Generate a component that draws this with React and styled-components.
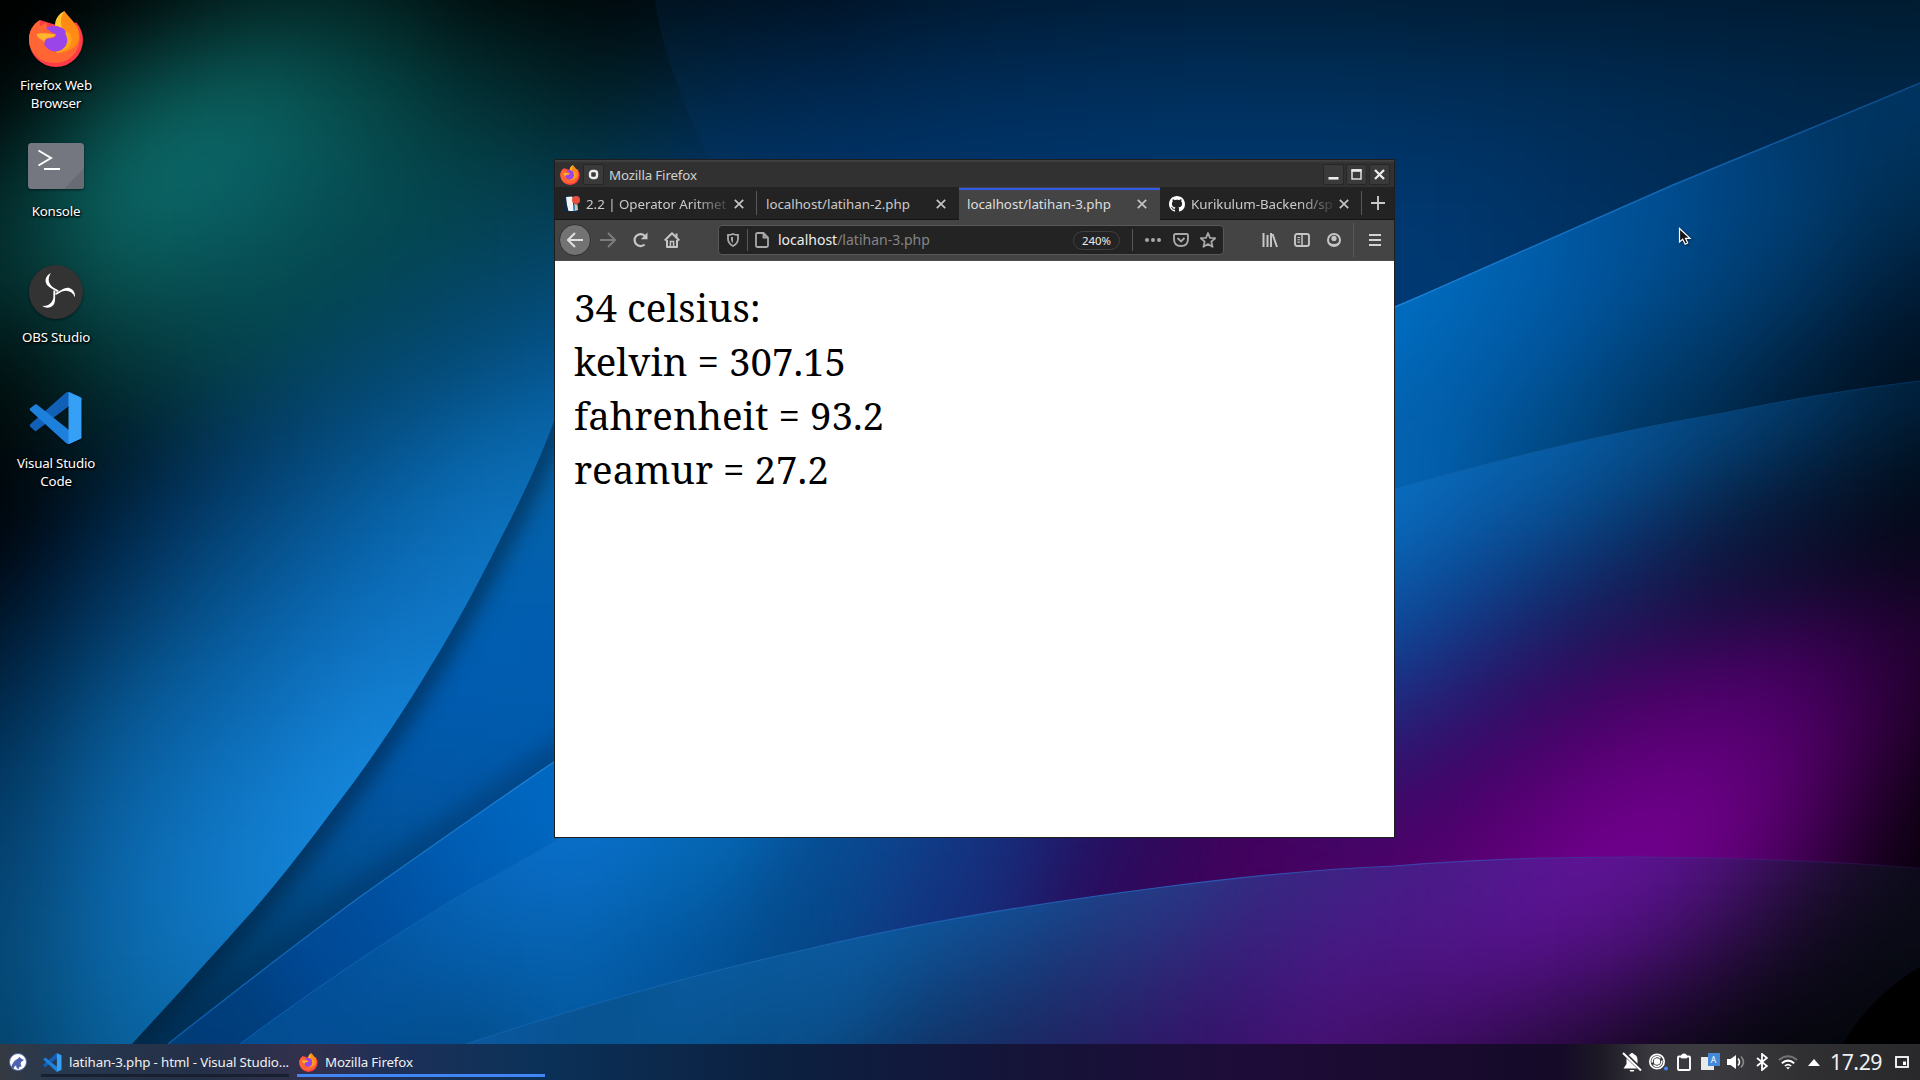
import React from "react";
import styled, { createGlobalStyle } from "styled-components";

const GlobalStyle = createGlobalStyle`
  * { box-sizing: border-box; }
  html, body { margin: 0; padding: 0; background: #000; overflow: hidden; }
  body { font-family: "Noto Sans", "Open Sans", sans-serif; }
  svg { display: block; flex: none; }
`;

/* ---------- Wallpaper ---------- */

const hex = (c) => [0, 2, 4].map((i) => parseInt(c.slice(i, i + 2), 16));
const grid = (xs, rows) =>
  rows.flatMap(([y, line]) => line.split(" ").map((c, i) => [xs[i], y, c]));

const skyNodes = [
  ...grid([0, 120, 240, 360, 480, 600], [
    [-90, "000000 000000 000c0c 000c0e 000000 000000"],
    [0, "000000 000202 022221 022423 000809 000508"],
    [90, "000101 074644 0b6260 064d4c 023033 011d22"],
    [180, "011f1f 0c6f6c 0a6468 065055 04444c 04374b"],
    [270, "032a2a 0a5a59 065056 04464f 034660 044a74"],
    [360, "000808 04393b 04444c 044668 044a7a 05599a"],
    [450, "000204 001a28 033663 054f87 0868ac 0a6ab0"],
    [540, "000106 002a50 044a80 0762a8 0d72c0 0f74c0"],
    [630, "00152a 033f6e 075c9f 0e70bf 0f78c8 0f78c8"],
    [720, "00294c 075a96 0c6bb5 1482d6 1480d0 1480d0"],
    [810, "033860 0a64a8 0f78c8 1789de 1787dc 1787dc"],
    [900, "04406c 0b6ab0 127ccc 1787dc 1787dc 1787dc"],
    [990, "04446c 0a68a8 0d70b8 0d70b8 0d70b8 0d70b8"],
    [1080, "033a60 085c95 085c95 085c95 085c95 085c95"],
  ]),
  ...grid([720, 840, 960, 1080, 1200, 1320, 1440, 1560, 1680, 1800, 1920], [
    [-90, "000408 000810 000c18 00101e 001020 001020 001020 001020 001020 001020 001020"],
    [0, "000d18 001428 001a33 001d38 001f3a 001f38 001e36 001d35 001c34 001c33 001c2c"],
    [90, "002244 002850 002c58 002e5c 00305f 00305e 002e5a 002c55 002a50 00264a 002446"],
    [180, "003060 003468 00356c 00366c 00386e 00386e 00366c 003060 002c56 002a50 002a50"],
    [270, "003468 003468 00386e 00386e 00386e 003a74 003a74 003468 003060 003060 003060"],
  ]),
];

const midNodes = [
  [560, 440, "0760a2"], [560, 540, "0360ac"], [540, 640, "005db2"], [480, 720, "015bae"],
  [420, 790, "0256a4"], [330, 880, "034f92"], [250, 960, "00406f"], [180, 1040, "002c4c"],
];

const bandNodes = [
  [554, 800, "006ac4"], [464, 860, "005cb2"], [357, 930, "004a98"], [200, 1043, "003c78"],
  [1390, 320, "0070c4"], [1400, 450, "0362b0"], [1480, 290, "0064b4"], [1480, 370, "025ca8"],
  [1560, 300, "0056a0"], [1560, 410, "004a86"], [1640, 250, "004f94"], [1680, 330, "00427a"],
  [1680, 410, "003058"], [1760, 220, "004078"], [1800, 300, "003460"], [1800, 390, "001c36"],
  [1880, 130, "003460"], [1910, 220, "002c50"], [1910, 300, "001830"], [1910, 370, "000e1c"],
];

const deepNodes = [
  [560, 860, "0a70cc"], [464, 930, "0560b0"], [357, 1000, "03529c"], [300, 1043, "034b90"],
  [450, 1040, "034a86"], [700, 860, "056ab8"], [850, 855, "074e96"], [930, 850, "103e88"],
  [1000, 850, "182c7c"], [1080, 850, "230f60"], [1150, 860, "30085a"], [1250, 850, "45005e"],
  [540, 960, "0560ac"], [700, 940, "03549c"], [800, 920, "034684"], [950, 895, "12307c"],
  [1395, 510, "0a70c4"], [1480, 480, "0864b0"], [1560, 470, "0760aa"], [1640, 450, "05508e"],
  [1720, 430, "044680"], [1800, 415, "023866"], [1900, 400, "002340"],
  [1400, 590, "095aaa"], [1480, 560, "08509a"], [1560, 540, "064280"], [1640, 530, "063468"],
  [1720, 520, "04203e"], [1800, 500, "031830"], [1900, 480, "000c18"],
  [1400, 660, "123e90"], [1480, 620, "13307a"], [1560, 610, "14205e"], [1640, 600, "1a1450"],
  [1720, 590, "160d3c"], [1800, 570, "0e0b2a"], [1900, 560, "060616"],
  [1400, 730, "2a1c74"], [1480, 700, "2c1068"], [1560, 690, "3a065e"], [1660, 690, "480062"],
  [1760, 680, "480068"], [1840, 660, "34004c"], [1910, 660, "1c0028"],
  [1400, 800, "3c0664"], [1500, 780, "4c006c"], [1600, 770, "5c0078"], [1700, 750, "62007c"],
  [1800, 740, "5c0074"], [1860, 760, "3c004c"], [1920, 760, "0e0012"], [1960, 800, "040006"],
  [1400, 860, "500068"], [1500, 850, "600078"], [1600, 840, "720090"], [1680, 820, "740090"],
  [1760, 840, "600078"], [1840, 850, "300040"], [1920, 860, "040006"],
];

const hillNodes = [
  [500, 1043, "0a58a0"], [700, 1000, "0a60aa"], [850, 960, "0c60a8"], [1000, 930, "1356a2"],
  [1150, 910, "24408c"], [1300, 890, "3a2684"], [1450, 880, "4a1c88"], [1600, 870, "62149a"],
  [1680, 880, "5c1492"], [1760, 880, "3c1060"], [1830, 890, "180e28"], [1910, 900, "0a0c18"],
  [740, 1043, "06487c"], [850, 1000, "0a5090"], [1000, 990, "143a74"], [1100, 980, "243078"],
  [1200, 970, "3a207c"], [1350, 960, "4c1688"], [1500, 950, "5a1296"], [1600, 950, "50107e"],
  [1700, 950, "340c54"], [1790, 960, "10091c"], [1880, 960, "060912"],
  [600, 1043, "074e86"], [900, 1043, "0a3462"], [1000, 1043, "162456"], [1100, 1043, "1e1a56"],
  [1200, 1043, "320f64"], [1350, 1043, "420f6a"], [1450, 1043, "360b54"], [1550, 1043, "220836"],
  [1650, 1043, "0e0616"], [1750, 1043, "04060b"], [1850, 1043, "030509"],
];

const STEP = 32;

/* Colour field: kernel stretched along the direction in which the light sweeps. */
function buildCells(nodes, [x0, y0, x1, y1], angle, along, across) {
  const pts = nodes.map(([x, y, c]) => [x, y, ...hex(c)]);
  const ca = Math.cos((angle * Math.PI) / 180);
  const sa = Math.sin((angle * Math.PI) / 180);
  const cells = [];
  for (let y = y0; y < y1; y += STEP) {
    for (let x = x0; x < x1; x += STEP) {
      let w = 0, r = 0, g = 0, b = 0;
      for (const p of pts) {
        const dx = x + STEP / 2 - p[0];
        const dy = y + STEP / 2 - p[1];
        const u = (dx * ca - dy * sa) / along;
        const v = (dx * sa + dy * ca) / across;
        const d = u * u + v * v;
        const k = Math.exp(-d / 2) + 1e-4 / Math.pow(1 + d, 3);
        w += k; r += p[2] * k; g += p[3] * k; b += p[4] * k;
      }
      cells.push([x, y, `rgb(${Math.round(r / w)},${Math.round(g / w)},${Math.round(b / w)})`]);
    }
  }
  return cells;
}

const Mesh = ({ nodes, box, angle = 35, along = 62, across = 42 }) => (
  <g filter="url(#soften)">
    {buildCells(nodes, box, angle, along, across).map(([x, y, fill]) => (
      <rect key={`${x}-${y}`} x={x} y={y} width={STEP + 0.5} height={STEP + 0.5} fill={fill} />
    ))}
  </g>
);

const SAIL = "M132 1044 C180 992 216 952 250 914 C282 878 312 838 339 802 C374 756 404 711 429 669 C457 624 480 580 500 540 C522 498 542 455 554 421 L600 300";
const BAND = "M168 1044 C230 995 292 947 357 899 C425 851 490 805 554 762 C800 600 1100 430 1395 307 C1490 266 1585 223 1673 185 C1755 151 1840 117 1920 83";
const DEEP = "M240 1044 C310 992 385 941 464 893 C500 873 530 856 560 838 C800 710 1100 570 1395 489 C1505 458 1615 431 1724 413 C1790 399 1855 389 1920 381";
const HILL = "M466 1044 C570 1010 690 975 804 950 C920 922 1040 903 1156 888 C1240 877 1320 869 1394 866 C1480 859 1560 857 1631 857 C1730 857 1830 861 1920 868";

const WallpaperSvg = styled.svg`
  position: absolute;
  inset: 0;
`;

const Wallpaper = () => (
  <WallpaperSvg width="1920" height="1080" viewBox="0 0 1920 1080">
    <defs>
      <filter id="soften" x="-5%" y="-5%" width="110%" height="110%" colorInterpolationFilters="sRGB">
        <feGaussianBlur stdDeviation="24" />
      </filter>
      <filter id="shade" filterUnits="userSpaceOnUse" x="0" y="0" width="1920" height="1080" colorInterpolationFilters="sRGB">
        <feGaussianBlur stdDeviation="11" />
      </filter>
      <clipPath id="c-mid"><path d={`${SAIL} L700 300 L700 1080 L100 1080 Z`} /></clipPath>
      <clipPath id="c-band"><path d={`${BAND} V1080 H120 Z`} /></clipPath>
      <clipPath id="c-deep"><path d={`${DEEP} V1080 H200 Z`} /></clipPath>
      <clipPath id="c-hill"><path d={`${HILL} V1080 H380 Z`} /></clipPath>
      <linearGradient id="edgeBand" gradientUnits="userSpaceOnUse" x1="168" y1="0" x2="1920" y2="0">
        <stop offset="0" stopColor="#0c5aa4" />
        <stop offset="0.2" stopColor="#1c80d4" />
        <stop offset="0.7" stopColor="#1a84dc" />
        <stop offset="1" stopColor="#0c4a88" />
      </linearGradient>
      <linearGradient id="edgeHill" gradientUnits="userSpaceOnUse" x1="466" y1="0" x2="1920" y2="0">
        <stop offset="0" stopColor="#1670bc" stopOpacity="0.4" />
        <stop offset="0.45" stopColor="#2460b4" />
        <stop offset="0.7" stopColor="#4438a4" />
        <stop offset="1" stopColor="#4a1070" stopOpacity="0.2" />
      </linearGradient>
      <linearGradient id="edgeDeep" gradientUnits="userSpaceOnUse" x1="240" y1="0" x2="1920" y2="0">
        <stop offset="0" stopColor="#0c60ae" />
        <stop offset="0.6" stopColor="#1478cc" />
        <stop offset="1" stopColor="#04305a" />
      </linearGradient>
      <linearGradient id="veil" gradientUnits="userSpaceOnUse" x1="680" y1="120" x2="850" y2="60">
        <stop offset="0" stopColor="#04407a" stopOpacity="0.16" />
        <stop offset="1" stopColor="#04407a" stopOpacity="0" />
      </linearGradient>
    </defs>
    <Mesh nodes={skyNodes} box={[-96, -96, 2000, 1160]} along={72} />
    <path d="M655 0 C660 40 680 100 712 165 H960 V0 Z" fill="url(#veil)" />
    <g clipPath="url(#c-mid)">
      <Mesh nodes={midNodes} box={[40, 280, 720, 1120]} along={80} />
      <path d={SAIL} fill="none" stroke="#001c38" strokeOpacity="0.7" strokeWidth="20" filter="url(#shade)" />
      <path d={BAND} fill="none" stroke="#002a55" strokeOpacity="0.4" strokeWidth="34" filter="url(#shade)" />
    </g>
    <g clipPath="url(#c-band)">
      <Mesh nodes={bandNodes} box={[80, 0, 2000, 1120]} />
    </g>
    <path d={BAND} fill="none" stroke="url(#edgeBand)" strokeWidth="1.4" />
    <g clipPath="url(#c-deep)">
      <Mesh nodes={deepNodes} box={[160, 320, 2000, 1120]} angle={42} />
    </g>
    <path d={DEEP} fill="none" stroke="url(#edgeDeep)" strokeWidth="1" />
    <g clipPath="url(#c-hill)">
      <Mesh nodes={hillNodes} box={[400, 800, 2000, 1120]} angle={45} along={75} />
    </g>
    <path d={HILL} fill="none" stroke="url(#edgeHill)" strokeWidth="1.2" />
    <path d="M1843 1044 C1862 1010 1890 985 1920 967 V1044 Z" fill="#000" />
  </WallpaperSvg>
);

/* ---------- Icons ---------- */

const FirefoxIcon = ({ size }) => (
  <svg width={size} height={size} viewBox="-1 0 56 56">
    <path d="M47.500 11.500 C52 17 54 23 54 29 A27 27 0 0 1 0 29 C0 21 4 13 11 9 L27 14 Z" fill="#ff3b47" />
    <path d="M11 9 C10.500 11 10.600 13 11.400 15.200 L17.500 11 C17.300 13.500 17.800 15.500 19 17.500 C30 19 46 10 48 15 C52 22 51.500 31 48 38.500 C43 48 35 52 25 52 C9 51.500 0 40 0 28 C0 20 4 13 11 9 Z" fill="#ff6633" />
    <path d="M35.500 0 C39 6 50 13 50 25 C50.500 34 42 42 27 42 L31 16 C27 14 30 5 35.500 0 Z" fill="#ff8a16" />
    <path d="M35.500 0 C29 3 26 9 26 14.500 L33 17 C31 11 32 5 35.500 0 Z" fill="#ffc72e" />
    <path d="M33 20 C41 19 44 26 42 32 C40 38 34 41.500 27 41.500 Z" fill="#ffa51a" />
    <circle cx="26.500" cy="28" r="12.500" fill="#9945ea" />
    <path d="M17 17 C21 14 31 14 37 20 C35 19.500 33 19.500 35.500 22 L20 22 Z" fill="#9945ea" />
    <path d="M37 21 C35 22 38.500 25 38.300 30 C37 37 33 40 27 41.500 C36 42 43 35 42.500 28 C42 24 41 22 37 21 Z" fill="#ffa51a" />
    <path d="M0.500 25 C2 18 6 17 12 18.500 C15 18.500 17 18 19 18.500 C21 21 25 22 27 23.500 C27 27 22 27 19 27.500 C16 28.500 15 31 15.500 34 C12 36 5 33 0.500 25 Z" fill="#ff6633" />
    <path d="M7.500 23.500 C11 21.500 16 22.500 26.800 23.500 C25.500 26.500 21 26.500 18.500 27 C16.500 27.800 15.500 29 15 31.500 C14 28.500 9 28 7.500 23.500 Z" fill="#ffb62e" />
  </svg>
);

const KonsoleIcon = () => (
  <svg width="56" height="46" viewBox="0 0 56 46">
    <rect width="56" height="46" rx="3.500" fill="#74777f" />
    <path d="M36 46 L56 25.500 V42.500 A3.500 3.500 0 0 1 52.500 46 Z" fill="#686b73" />
    <path d="M10.500 7.500 L23 15 L10.500 22.500" fill="none" stroke="#fff" strokeWidth="2" />
    <path d="M16 26 H32" stroke="#fff" strokeWidth="2" />
  </svg>
);

const ObsIcon = () => (
  <svg width="54" height="54" viewBox="0 0 54 54">
    <circle cx="27" cy="27" r="27" fill="#333" />
    {[0, 120, 240].map((a) => (
      <path
        key={a}
        transform={`rotate(${a} 27 27)`}
        d="M28 27 C26 24.500 18 22.500 16.800 17.500 C15.800 13 18.500 9.500 22 8 C18.500 13 19.200 18 23 21.500 C25 23.300 28 24 30 26 Z"
        fill="#fff"
      />
    ))}
  </svg>
);

const VsCodeIcon = ({ size }) => (
  <svg width={size} height={size} viewBox="0 0 54 54">
    <path d="M37 1.500 C38.500 0.700 40 0.800 41.500 1.500 L51 6 C52 6.500 52.500 7 52.500 8.500 L40 15 L6.500 40.500 L1.500 36 C0.500 35 0.500 34 1.500 33 Z" fill="#1160b8" />
    <path d="M6 13.500 C7 13 8 13.500 8.500 14 L40 39 L52.500 46 C52.500 46.500 52 47.500 51 48 L41.500 52.500 C40 53.200 38.500 53.200 37 52 L1.200 19.500 C0.500 18.500 0.500 18 1.500 17 Z" fill="#1c80dc" />
    <path d="M39.500 1 L51 6 C52 6.500 52.500 7 52.500 8 V46 C52.500 47 52 47.500 51 48 L39.500 53 Z" fill="#36a0f6" />
  </svg>
);

const Line = ({ w = 16, h = 16, sw = 2, c = "#b8b8b8", children }) => (
  <svg width={w} height={h} viewBox={`0 0 ${w} ${h}`} fill="none" stroke={c} strokeWidth={sw}>
    {children}
  </svg>
);

const CloseIcon = () => (
  <Line w={10} h={10} sw={1.7} c="#c4c4c4"><path d="M0.800 0.800 L9.200 9.200 M9.200 0.800 L0.800 9.200" /></Line>
);

/* ---------- Desktop ---------- */

const Desktop = styled.main`
  position: relative;
  width: 1920px;
  height: 1080px;
  overflow: hidden;
  display: flex;
  flex-direction: column;
  justify-content: space-between;
`;

const Launchers = styled.div`
  position: relative;
  display: flex;
  flex-direction: column;
  width: 112px;
`;

const Launcher = styled.div`
  height: 126px;
  padding-top: 12px;
  display: flex;
  flex-direction: column;
  align-items: center;
  gap: 8px;
`;

const LauncherIcon = styled.div`
  height: 56px;
  margin-top: ${(p) => p.$lift || 0}px;
  margin-bottom: ${(p) => -(p.$lift || 0)}px;
  display: flex;
  align-items: center;
  filter: drop-shadow(0 1px 1px rgba(0, 0, 0, 0.5));
`;

const LauncherLabel = styled.div`
  width: 96px;
  font-size: 13.33px;
  letter-spacing: -0.18px;
  line-height: 18px;
  text-align: center;
  color: #fff;
  text-shadow: 1px 1px 2px #000, 0 1px 3px #000;
`;

/* ---------- Window ---------- */

const Window = styled.section`
  position: absolute;
  left: 554px;
  top: 159px;
  width: 841px;
  height: 679px;
  border: 1px solid #1e1e1e;
  background: #fff;
  display: flex;
  flex-direction: column;
`;

const TitleBar = styled.header`
  height: 27px;
  flex: none;
  padding: 2px 4px 0 5px;
  display: flex;
  align-items: center;
  background: linear-gradient(#444 0, #303030 3px, #323232);
  color: #d0d0d0;
  font-size: 13.33px;
  letter-spacing: -0.15px;
`;

const TitleText = styled.span`
  flex: 1;
  margin-left: 5px;
`;

const TitleButton = styled.div`
  width: 21px;
  height: 21px;
  margin-left: ${(p) => p.$gap || 0}px;
  border: 1px solid #272727;
  border-radius: 2px;
  background: #3a3a3a;
  display: flex;
  align-items: center;
  justify-content: center;
`;

const TabStrip = styled.nav`
  height: 33px;
  flex: none;
  display: flex;
  background: #232323;
  border-bottom: 1px solid #151515;
`;

const Tab = styled.div`
  width: 201px;
  height: 33px;
  flex: none;
  display: flex;
  align-items: center;
  padding: ${(p) => (p.$active ? "0 13px 0 8px" : "0 12px 0 9px")};
  color: ${(p) => (p.$active ? "#dedede" : "#cacaca")};
  font-size: 13.33px;
  letter-spacing: -0.03px;
  background: ${(p) => (p.$active ? "linear-gradient(#2f5be8, #2f5be8) 0 1px / 100% 2px no-repeat, #444" : "transparent")};
`;

const TabLabel = styled.span`
  flex: 1;
  min-width: 0;
  white-space: nowrap;
  margin-left: ${(p) => (p.$icon ? 6 : 0)}px;
  margin-right: ${(p) => (p.$icon ? 7 : 0)}px;
  mask-image: ${(p) => (p.$icon ? "linear-gradient(90deg, #000 calc(100% - 32px), rgba(0, 0, 0, 0.15))" : "none")};
`;

const Divider = styled.i`
  width: 1px;
  height: ${(p) => p.$h}px;
  align-self: center;
  flex: none;
  background: #585858;
`;

const NewTab = styled.div`
  flex: 1;
  display: flex;
  align-items: center;
  justify-content: center;
`;

const Toolbar = styled.div`
  height: 41px;
  flex: none;
  background: #444;
  border-bottom: 1px solid #4e4e4e;
  display: flex;
  align-items: center;
  padding-left: 4px;
`;

const ToolButton = styled.div`
  width: ${(p) => p.$w || 32}px;
  height: 32px;
  flex: none;
  display: flex;
  align-items: center;
  justify-content: center;
`;

const BackButton = styled(ToolButton)`
  border-radius: 50%;
  background: #737373;
  border: 1px solid #303030;
`;

const UrlBar = styled.div`
  width: 506px;
  height: 30px;
  flex: none;
  margin-left: 30px;
  border: 1px solid #585858;
  border-radius: 4px;
  background: #232323;
  display: flex;
  align-items: center;
  font-size: 14px;
  line-height: 20px;
  color: #ececec;
`;

const UrlText = styled.span`
  flex: 1;
  margin-left: 2px;
  padding-bottom: 1px;
`;

const UrlPath = styled.span`
  color: #858585;
`;

const Zoom = styled.span`
  width: 47px;
  height: 19px;
  margin-right: 12px;
  border: 1px solid #404040;
  border-radius: 10px;
  font-size: 11.4px;
  line-height: 17px;
  text-align: center;
`;

const StarButton = styled(ToolButton)`
  width: 30px;
  margin-left: 4px;
`;

const ToolGroup = styled.div`
  display: flex;
  margin-left: 30px;
  margin-right: 3px;
`;

const MenuButton = styled.div`
  flex: 1;
  display: flex;
  justify-content: center;
  padding-left: 2px;
`;

const Page = styled.article`
  flex: 1;
  padding: 19px;
  color: #000;
  font-family: "Noto Serif", "DejaVu Serif Condensed", "DejaVu Serif", serif;
  font-size: 38.4px;
  letter-spacing: 0.02px;
  line-height: 54px;
`;

const PageLine = styled.div`
  white-space: nowrap;
`;

/* ---------- Taskbar ---------- */

const Taskbar = styled.footer`
  position: relative;
  height: 36px;
  display: flex;
  align-items: stretch;
  color: #f0f0f0;
  background: linear-gradient(90deg, #353a42 0, #28384e 50px, #243048 200px, #33304e 310px, #1e3058 390px, #0b3158 540px,
    #0c2040 780px, #161238 1050px, #1e0c38 1250px, #150a28 1560px, #1c1824 1600px, #38383e 1650px, #3c3b40 1710px, #303032 1800px, #29292b 1920px);
`;

const StartButton = styled.div`
  width: 41px;
  padding-left: 9px;
  display: flex;
  align-items: center;
`;

const Task = styled.div`
  width: 248px;
  flex: none;
  margin-right: 8px;
  padding: 0 0 0 2px;
  display: flex;
  align-items: center;
  gap: 7px;
  font-size: 13.33px;
  letter-spacing: -0.15px;
  white-space: nowrap;
  background: linear-gradient(${(p) => p.$line}, ${(p) => p.$line}) 0 30px / 100% 3px no-repeat;
`;

const Tray = styled.div`
  margin-left: auto;
  display: flex;
  align-items: center;
`;

const TrayItem = styled.div`
  width: 26px;
  display: flex;
  justify-content: center;
`;

const Clock = styled.time`
  width: 62px;
  padding-right: 4px;
  text-align: center;
  font-size: 21.3px;
  letter-spacing: -0.45px;
  line-height: 36px;
  white-space: nowrap;
`;

const TrayEnd = styled.div`
  width: 31px;
  padding-left: 6px;
`;

const LanguageBadge = styled.div`
  width: 19px;
  height: 18px;
  display: flex;
  justify-content: flex-end;
  align-items: flex-start;
  background: linear-gradient(#e8e8e8, #e8e8e8) 0 4px / 13px 13px no-repeat;
`;

const LanguageLetter = styled.span`
  width: 12px;
  height: 13px;
  background: #4488d8;
  color: #fff;
  font-size: 8.5px;
  line-height: 13px;
  text-align: center;
`;

const CursorSvg = styled.svg`
  position: absolute;
  left: 1678px;
  top: 227px;
  filter: drop-shadow(1px 1px 1px rgba(0, 0, 0, 0.5));
`;

export default function App() {
  return (
    <Desktop>
      <GlobalStyle />
      <Wallpaper />

      <Launchers>
        <Launcher>
          <LauncherIcon $lift={-1}><FirefoxIcon size={56} /></LauncherIcon>
          <LauncherLabel>Firefox Web Browser</LauncherLabel>
        </Launcher>
        <Launcher>
          <LauncherIcon><KonsoleIcon /></LauncherIcon>
          <LauncherLabel>Konsole</LauncherLabel>
        </Launcher>
        <Launcher>
          <LauncherIcon><ObsIcon /></LauncherIcon>
          <LauncherLabel>OBS Studio</LauncherLabel>
        </Launcher>
        <Launcher>
          <LauncherIcon><VsCodeIcon size={54} /></LauncherIcon>
          <LauncherLabel>Visual Studio Code</LauncherLabel>
        </Launcher>
      </Launchers>

      <Window>
        <TitleBar>
          <FirefoxIcon size={20} />
          <TitleButton $gap={3}>
            <Line w={11} h={11} sw={2.4} c="#ececec"><rect x="2" y="2" width="7" height="7" rx="2.500" /></Line>
          </TitleButton>
          <TitleText>Mozilla Firefox</TitleText>
          <TitleButton>
            <Line w={11} h={11} sw={2.6} c="#ececec"><path d="M0.500 9.300 H10.500" /></Line>
          </TitleButton>
          <TitleButton $gap={2}>
            <Line w={11} h={11} sw={1.4} c="#ececec"><rect x="1" y="1" width="9" height="9" /><path d="M0.500 1.500 H10.500" strokeWidth="2.600" /></Line>
          </TitleButton>
          <TitleButton $gap={2}>
            <Line w={11} h={11} sw={2.3} c="#ececec"><path d="M1 1 L10 10 M10 1 L1 10" /></Line>
          </TitleButton>
        </TitleBar>

        <TabStrip>
          <Tab>
            <svg width="16" height="16" viewBox="0 0 16 16">
              <rect width="16" height="16" fill="#12283c" />
              <path d="M2 1 L8 0.500 L9.500 3 L9 8 L10 15 H4.500 L3 9 Z" fill="#f2f5f7" />
              <path d="M10 8 L13.500 8.500 L14 14 L11 15 Z" fill="#d8c2a8" />
              <path d="M9 9 L11 9 L11 15 L9.500 15 Z" fill="#4a8ab8" />
              <circle cx="12" cy="4" r="4" fill="#e8503e" />
            </svg>
            <TabLabel $icon>2.2 | Operator Aritmet</TabLabel>
            <CloseIcon />
          </Tab>
          <Divider $h={24} />
          <Tab>
            <TabLabel>localhost/latihan-2.php</TabLabel>
            <CloseIcon />
          </Tab>
          <Divider $h={0} />
          <Tab $active>
            <TabLabel>localhost/latihan-3.php</TabLabel>
            <CloseIcon />
          </Tab>
          <Tab>
            <svg width="16" height="16" viewBox="0 0 16 16" fill="#fff">
              <path d="M8 0C3.580 0 0 3.580 0 8c0 3.540 2.290 6.530 5.470 7.590.4.070.55-.17.55-.38 0-.19-.01-.82-.01-1.490-2.010.37-2.530-.49-2.690-.94-.09-.23-.48-.94-.82-1.130-.28-.15-.68-.52-.01-.53.63-.01 1.080.58 1.230.82.72 1.210 1.870.87 2.330.66.07-.52.28-.87.51-1.070-1.780-.2-3.640-.89-3.640-3.950 0-.87.31-1.590.82-2.150-.08-.2-.36-1.020.08-2.120 0 0 .67-.21 2.200.82.64-.18 1.320-.27 2-.27s1.360.09 2 .27c1.530-1.040 2.200-.82 2.200-.82.44 1.100.16 1.920.08 2.120.51.56.82 1.270.82 2.150 0 3.070-1.870 3.750-3.650 3.950.29.25.54.73.54 1.480 0 1.070-.01 1.930-.01 2.200 0 .21.15.46.55.38A8.010 8.010 0 0 0 16 8c0-4.420-3.580-8-8-8z" />
            </svg>
            <TabLabel $icon>Kurikulum-Backend/sp</TabLabel>
            <CloseIcon />
          </Tab>
          <Divider $h={24} />
          <NewTab><Line w={14} h={14} sw={1.9} c="#c8c8c8"><path d="M7 0 V14 M0 7 H14" /></Line></NewTab>
        </TabStrip>

        <Toolbar>
          <BackButton>
            <Line sw={2} c="#e0e0e0"><path d="M0.800 8 H16 M8 1 L1 8 L8 15" /></Line>
          </BackButton>
          <ToolButton $w={33}>
            <Line sw={2} c="#7c7c7c"><path d="M15.200 8 H0 M8 1 L15 8 L8 15" /></Line>
          </ToolButton>
          <ToolButton>
            <Line sw={2.2} c="#c6c6c6"><path d="M12.600 12.500 A6 6 0 1 1 12.500 3.500 L14 6" /><path d="M15.500 0.500 V7.200 H8.800 Z" fill="#c6c6c6" stroke="none" /></Line>
          </ToolButton>
          <ToolButton>
            <Line sw={2} c="#c6c6c6">
              <path d="M0.700 8.500 L8 1.300 L15.300 8.500 M3 8 V14.900 H13 V8" strokeLinejoin="round" />
              <path d="M6.400 15 V9.500 H9.600 V15" strokeWidth="1.500" /><rect x="12" y="2" width="1" height="3" fill="#c6c6c6" strokeWidth="1" />
            </Line>
          </ToolButton>
          <UrlBar>
            <ToolButton $w={28}>
              <Line w={12} h={14} sw={1.8} c="#a8a8a8">
                <path d="M1 2 Q4 2 6 1 Q8 2 11 2 V6 Q11 10.500 6 13 Q1 10.500 1 6 Z" />
                <path d="M6 4 V10 Q4 8.500 4 6.500 V4 Z" fill="#a8a8a8" stroke="none" />
              </Line>
            </ToolButton>
            <Divider $h={22} />
            <ToolButton $w={28}>
              <Line w={14} h={16} sw={1.8} c="#a8a8a8"><path d="M2.500 1 H8.500 L13 5.500 V13.500 Q13 15 11.500 15 H2.500 Q1 15 1 13.500 V2.500 Q1 1 2.500 1 Z M8.500 1 V5.500 H13" /></Line>
            </ToolButton>
            <UrlText>localhost<UrlPath>/latihan-3.php</UrlPath></UrlText>
            <Zoom>240%</Zoom>
            <Divider $h={22} />
            <ToolButton $w={40}>
              <svg width="16" height="4" viewBox="0 0 16 4" fill="#a8a8a8"><circle cx="2" cy="2" r="2" /><circle cx="8" cy="2" r="2" /><circle cx="14" cy="2" r="2" /></svg>
            </ToolButton>
            <ToolButton $w={16}>
              <Line h={14} sw={1.9} c="#a8a8a8"><path d="M2.500 1 H13.500 Q15 1 15 2.500 V6 Q15 13 8 13 Q1 13 1 6 V2.500 Q1 1 2.500 1 Z M4.500 5 L8 8.500 L11.500 5" /></Line>
            </ToolButton>
            <StarButton>
              <Line sw={1.8} c="#a8a8a8"><path strokeLinejoin="round" d="M8 1 L10 5.800 L15.200 6.200 L11.300 9.600 L12.500 14.800 L8 12 L3.500 14.800 L4.700 9.600 L0.800 6.200 L6 5.800 Z" /></Line>
            </StarButton>
          </UrlBar>
          <ToolGroup>
            <ToolButton>
              <Line sw={2} c="#c6c6c6"><path d="M1.500 1 V15 M5.500 3 V15 M9 1 V15 M10.500 2 L15 15" /></Line>
            </ToolButton>
            <ToolButton>
              <Line h={14} sw={1.9} c="#c6c6c6"><rect x="1" y="1" width="14" height="12" rx="2" /><path d="M8 1 V13" strokeWidth="1.500" /><path d="M3.500 4.500 H6 M3.500 6.800 H6 M3.500 9.100 H6" strokeWidth="1.100" /></Line>
            </ToolButton>
            <ToolButton>
              <Line w={14} h={14} sw={2} c="#c6c6c6"><circle cx="7" cy="7" r="6" /><circle cx="7" cy="5.400" r="2.600" fill="#c6c6c6" stroke="none" /><path d="M2.500 9.500 Q7 12.500 11.500 9.500 Q10 13 7 13 Q4 13 2.500 9.500 Z" fill="#c6c6c6" stroke="none" /></Line>
            </ToolButton>
          </ToolGroup>
          <Divider $h={34} />
          <MenuButton>
            <Line w={12} h={12} sw={2} c="#d4d4d4"><path d="M0 1 H12 M0 6 H12 M0 11 H12" /></Line>
          </MenuButton>
        </Toolbar>

        <Page>
          <PageLine>34 celsius:</PageLine>
          <PageLine>kelvin = 307.15</PageLine>
          <PageLine>fahrenheit = 93.2</PageLine>
          <PageLine>reamur = 27.2</PageLine>
        </Page>
      </Window>

      <CursorSvg width="14" height="20" viewBox="0 0 14 20">
        <path d="M1.500 1.500 V15 L4.700 12.200 L7.200 17.300 L9.700 16 L7.500 11.300 H12 Z" fill="#151515" stroke="#fff" strokeWidth="1.200" />
      </CursorSvg>

      <Taskbar>
        <StartButton>
          <svg width="18" height="18" viewBox="0 0 18 18">
            <circle cx="9" cy="9" r="8.500" fill="#fff" stroke="#5068a8" />
            <path d="M2 14 Q4.500 7.500 8.500 6 L10.500 4 L12 5.500 L15 7 L12 9 Q11 11 12.500 14 Q10 12 9.500 16.500 Q7 15 7 12.500 Q5 13.500 4.500 15.800 Z" fill="#4c62ae" />
          </svg>
        </StartButton>
        <Task $line="#18202f">
          <VsCodeIcon size={19} />
          latihan-3.php - html - Visual Studio...
        </Task>
        <Task $line="#4285f4">
          <FirefoxIcon size={19} />
          Mozilla Firefox
        </Task>
        <Tray>
          <TrayItem>
            <svg width="20" height="20" viewBox="0 0 20 20">
              <path d="M10 1 Q11.500 1 11.700 2.300 Q15.500 3.500 15.500 8 V12 L18.500 16.500 H1.500 L4.500 12 V8 Q4.500 3.500 8.300 2.300 Q8.500 1 10 1 Z M7.500 18 H12.500 L11.500 19.500 H8.500 Z" fill="#fff" />
              <path d="M1.800 1 L19 17.500" stroke="#2c2c32" strokeWidth="4" />
              <path d="M1 1 L19 18.500" stroke="#fff" strokeWidth="2" />
            </svg>
          </TrayItem>
          <TrayItem>
            <svg width="20" height="18" viewBox="0 0 20 18">
              <circle cx="9" cy="8.500" r="7.200" fill="none" stroke="#fff" strokeWidth="1.700" />
              <circle cx="9" cy="8.500" r="3.200" fill="#fff" />
              <path d="M4.300 9.500 A4.800 4.800 0 0 1 12.500 5.200 M13.700 7.500 A4.800 4.800 0 0 1 5.500 11.800" fill="none" stroke="#fff" strokeWidth="1.500" />
              <circle cx="18" cy="15.500" r="2" fill="#4285f4" />
            </svg>
          </TrayItem>
          <TrayItem>
            <Line w={14} h={18} sw={1.9} c="#fff"><rect x="1" y="3.500" width="12" height="13.500" rx="1" /><path d="M4.200 3 V5 H9.800 V3 L8.500 1 H5.500 Z" fill="#fff" strokeWidth="0.800" /></Line>
          </TrayItem>
          <TrayItem>
            <LanguageBadge><LanguageLetter>A</LanguageLetter></LanguageBadge>
          </TrayItem>
          <TrayItem>
            <Line w={18} h={14} sw={1.6} c="#fff"><path d="M0 4 H3.500 L9 0 V14 L3.500 10 H0 Z" fill="#fff" stroke="none" /><path d="M11 3.500 Q14 7 11 10.500" /><path d="M14 1.500 Q19 7 14 12.500" stroke="#88888c" /></Line>
          </TrayItem>
          <TrayItem>
            <Line w={12} h={18} sw={1.8} c="#fff"><path d="M1 5 L11 13 L6 17 V1 L11 5 L1 13" /></Line>
          </TrayItem>
          <TrayItem>
            <Line w={20} h={15} sw={2} c="#fff"><path d="M1 5 Q10 -2.500 19 5" stroke="#737375" /><path d="M3.800 8.200 Q10 3 16.200 8.200" /><path d="M6.800 11 Q10 8.300 13.200 11" strokeWidth="1.600" /><path d="M8 12.300 H12 L10 14.500 Z" fill="#fff" stroke="none" /></Line>
          </TrayItem>
          <TrayItem>
            <svg width="12" height="7" viewBox="0 0 12 7"><path d="M6 0 L12 7 H0 Z" fill="#fff" /></svg>
          </TrayItem>
          <Clock>17.29</Clock>
          <TrayEnd>
            <Line w={14} h={12} sw={1.8} c="#fff"><rect x="1" y="1" width="12" height="10" /><rect x="8.500" y="6" width="2" height="2.500" fill="#fff" strokeWidth="1" /></Line>
          </TrayEnd>
        </Tray>
      </Taskbar>
    </Desktop>
  );
}
